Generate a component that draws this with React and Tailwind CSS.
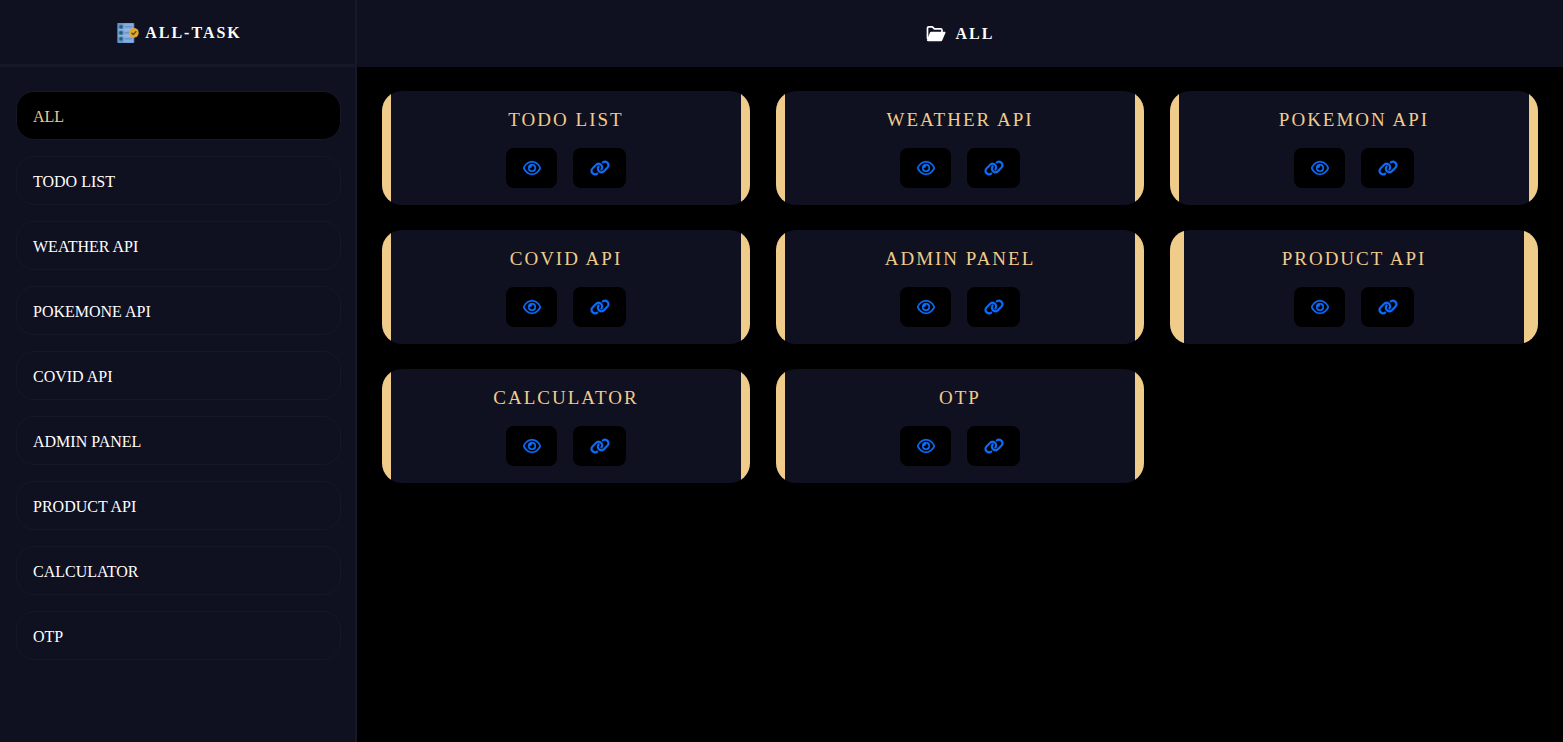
import { FaRegEye, FaLink } from "react-icons/fa6";

const menu = ["ALL", "TODO LIST", "WEATHER API", "POKEMONE API", "COVID API", "ADMIN PANEL", "PRODUCT API", "CALCULATOR", "OTP"];
const tasks = ["TODO LIST", "WEATHER API", "POKEMON API", "COVID API", "ADMIN PANEL", "PRODUCT API", "CALCULATOR", "OTP"];

function TaskLogo() {
  return (
    <svg viewBox="0 0 22 22" className="size-[22px]" aria-hidden="true">
      <rect x="0.3" y="1" width="17" height="20" rx="0.8" fill="#6394cd" />
      <path d="M6.5 1.5h9.5v19H6.5z" fill="#86ace0" />
      <path d="M1 7.8h15M1 13.8h15" stroke="#a9c4ea" strokeWidth="0.8" />
      <path d="M7.5 4.8h7.5M7.5 10.8h5M7.5 16.8h7.5" stroke="#6c93ca" strokeWidth="1.6" />
      <rect x="2.4" y="3.2" width="3.2" height="3.2" rx="1" fill="#285f63" />
      <rect x="2.4" y="9.2" width="3.2" height="3.2" rx="1" fill="#285f63" />
      <rect x="2.4" y="15.2" width="3.2" height="3.2" rx="1" fill="#285f63" />
      <circle cx="16.8" cy="10.8" r="4.9" fill="#e0a82c" />
      <path d="m14.5 10.7 1.8 1.8 3-3.2" fill="none" stroke="#5e481f" strokeWidth="1.3" />
    </svg>
  );
}

function FolderIcon() {
  return (
    <svg viewBox="0 0 20 16" className="h-4 w-5" aria-hidden="true">
      <path d="M1.5 13V2.2C1.5 1.3 2 0.9 2.8 0.9H6.4L8.4 2.8H14.6C15.4 2.8 16 3.4 16 4.2V6" fill="none" stroke="white" strokeWidth="1.7" strokeLinejoin="round" />
      <path d="M5.2 5.8H18.6C19.3 5.8 19.7 6.5 19.4 7.1L16.3 14.2C16 14.9 15.5 15.2 14.8 15.2H2C1.1 15.2 0.7 14.5 1 13.8L4 6.6C4.2 6.1 4.7 5.8 5.2 5.8Z" fill="white" />
    </svg>
  );
}

function TaskCard({ title, wide }) {
  return (
    <article className="overflow-hidden rounded-[20px] bg-[#0f1020]">
      <div className={`flex h-[114px] flex-col items-center border-[#f0cc8b] pt-[13px] ${wide ? "border-x-[14px]" : "border-x-[9px]"}`}>
        <h2 className="text-[19px] leading-8 tracking-[2px] text-[#f0cc8b]">{title}</h2>
        <div className="mt-3 flex gap-4 text-[#0d6efd]">
          <button type="button" aria-label={`View ${title}`} className="flex h-10 w-[51px] items-center justify-center rounded-lg bg-black">
            <FaRegEye className="h-4 w-[18px]" strokeWidth={8} />
          </button>
          <a href="#" aria-label={`Open ${title}`} className="flex h-10 w-[53px] items-center justify-center rounded-lg bg-black">
            <FaLink className="h-4 w-5" strokeWidth={10} />
          </a>
        </div>
      </div>
    </article>
  );
}

export default function App() {
  return (
    <div className="flex min-h-screen bg-black font-['Liberation_Serif',serif] text-white">
      <aside className="w-[357px] shrink-0 border-r-2 border-[#171827] bg-[#0f1020]">
        <div className="flex h-[67px] items-center justify-center gap-1.5 border-b-3 border-[#171827] pt-0.5 pl-1">
          <TaskLogo />
          <h1 className="text-base font-bold tracking-[2px]">ALL-TASK</h1>
        </div>
        <nav className="flex flex-col gap-4 pt-6 pr-3.5 pl-4">
          {menu.map((item, i) => (
            <a key={item} href="#" className={`flex h-[49px] items-center rounded-[18px] border border-[#171827] px-4 pt-0.5 text-base ${i === 0 ? "bg-black text-[#f0cc8b]" : ""}`}>
              {item}
            </a>
          ))}
        </nav>
      </aside>
      <div className="min-w-0 flex-1">
        <header className="flex h-[67px] items-center justify-center gap-2.5 bg-[#0f1020]">
          <FolderIcon />
          <h2 className="text-base font-bold tracking-[2px]">ALL</h2>
        </header>
        <main className="grid grid-cols-3 gap-x-[26px] gap-y-[25px] px-[25px] py-6">
          {tasks.map((title) => (
            <TaskCard key={title} title={title} wide={title === "PRODUCT API"} />
          ))}
        </main>
      </div>
    </div>
  );
}
